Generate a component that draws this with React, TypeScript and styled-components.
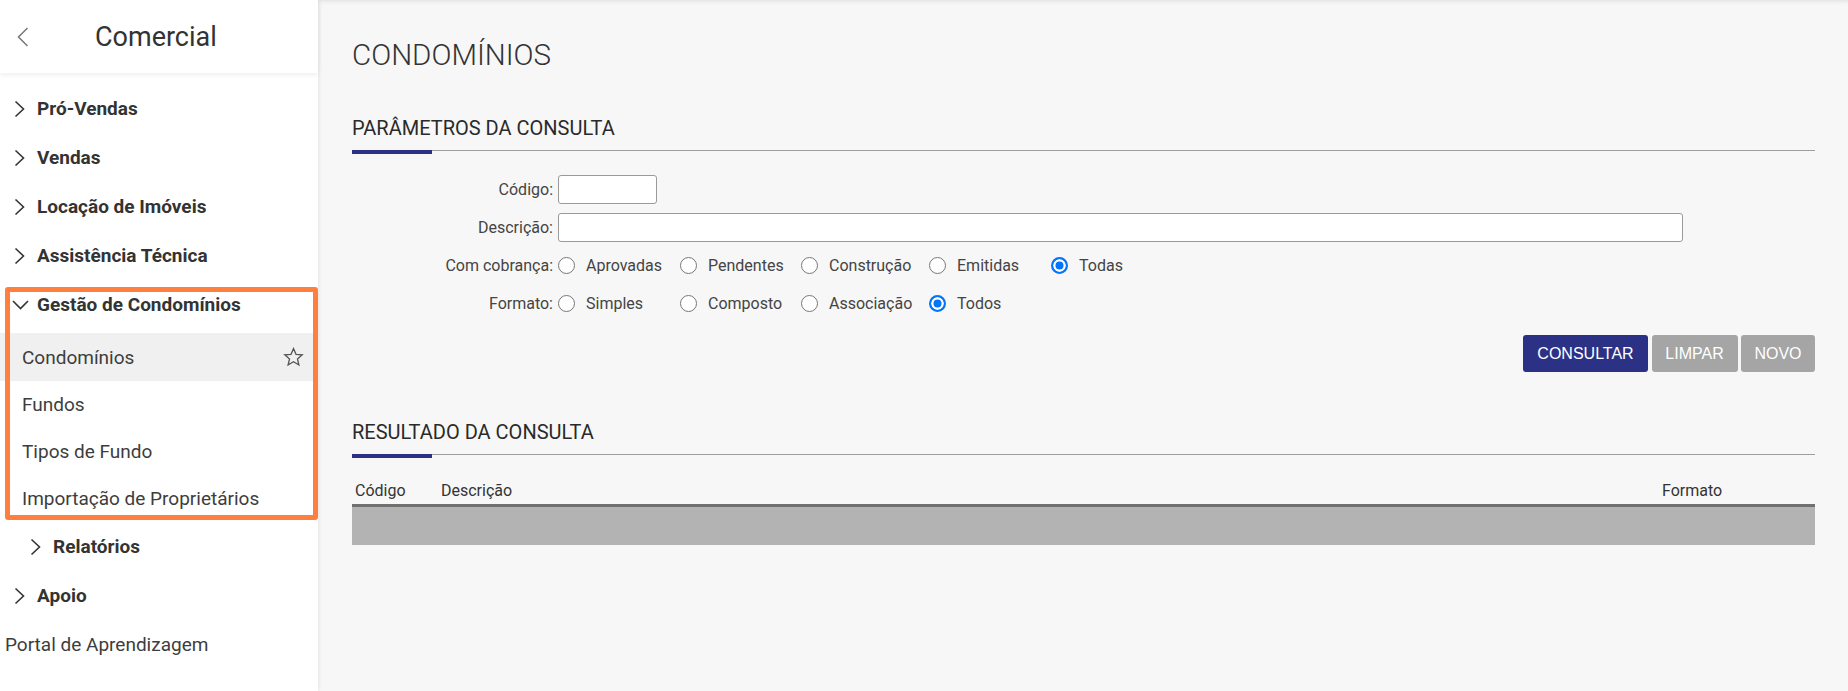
import React from "react";
import styled, { createGlobalStyle } from "styled-components";

const GlobalStyle = createGlobalStyle`
  html, body { margin: 0; padding: 0; }
  body { font-family: Roboto, "Liberation Sans", Arial, sans-serif; background: #f7f7f7; }
  * { box-sizing: border-box; }
`;

const Page = styled.div`
  display: flex;
  height: 691px;
  overflow: hidden;
`;

const Sidebar = styled.aside`
  position: relative;
  width: 318px;
  flex: 0 0 318px;
  background: #ffffff;
  box-shadow: 1px 0 4px rgba(0, 0, 0, 0.08);
  z-index: 2;
`;

const SideHeader = styled.div`
  display: flex;
  align-items: center;
  height: 73px;
  box-shadow: 0 2px 5px rgba(0, 0, 0, 0.07);
  padding-left: 17px;
`;

const SideTitle = styled.div`
  margin-left: 66px;
  font-size: 27px;
  color: #333;
  font-weight: 400;
`;

const Menu = styled.nav`
  padding-top: 11px;
`;

const Item = styled.div<{ $h: number; $indent: number; $bold?: boolean; $active?: boolean; $pb?: number }>`
  display: flex;
  align-items: center;
  height: ${(p) => p.$h}px;
  padding-left: ${(p) => p.$indent}px;
  padding-bottom: ${(p) => p.$pb ?? 0}px;
  padding-right: 12px;
  font-size: 19px;
  font-weight: ${(p) => (p.$bold ? 700 : 400)};
  color: ${(p) => (p.$bold ? "#333" : "#3d3d3d")};
  background: ${(p) => (p.$active ? "#f0f0f0" : "transparent")};
  white-space: nowrap;
`;

const ChevSlot = styled.span`
  display: inline-flex;
  align-items: center;
  width: 23px;
  flex: 0 0 23px;
`;

const ItemText = styled.span`
  flex: 1;
`;

const StarWrap = styled.span`
  display: inline-flex;
  margin-right: 2px;
`;

const Highlight = styled.div`
  position: absolute;
  left: 5px;
  top: 287px;
  width: 313px;
  height: 233px;
  border: 5px solid #ff7f3f;
  border-radius: 3px;
  pointer-events: none;
`;

const Main = styled.main`
  flex: 1;
  padding: 39px 33px 0 34px;
  background: #f7f7f7;
  box-shadow: inset 0 5px 5px -4px rgba(0, 0, 0, 0.1);
`;

const PageTitle = styled.h1`
  margin: 0;
  font-size: 29.5px;
  line-height: 32px;
  font-weight: 300;
  color: #333;
`;

const Section = styled.section<{ $mt: number }>`
  margin-top: ${(p) => p.$mt}px;
`;

const SectionTitle = styled.h2`
  margin: 0 0 10px 0;
  font-size: 20px;
  line-height: 24px;
  font-weight: 400;
  color: #2a2a2a;
`;

const Rule = styled.div`
  position: relative;
  height: 4px;
  background: linear-gradient(#9e9e9e, #9e9e9e) top left / 100% 1px no-repeat;
  &::before {
    content: "";
    position: absolute;
    left: 0;
    top: 0;
    width: 80px;
    height: 4px;
    background: #2b3185;
  }
`;

const Form = styled.div`
  display: grid;
  grid-template-columns: 201px 1fr;
  column-gap: 5px;
  row-gap: 9px;
  margin-top: 21px;
  grid-auto-rows: 29px;
`;

const Label = styled.label`
  display: flex;
  align-items: center;
  justify-content: flex-end;
  font-size: 16px;
  color: #444;
`;

const Field = styled.div`
  display: flex;
  align-items: center;
`;

const Input = styled.input<{ $w: number }>`
  width: ${(p) => p.$w}px;
  height: 29px;
  border: 1px solid #9a9a9a;
  border-radius: 3px;
  background: #fff;
  font-family: inherit;
  font-size: 16px;
  padding: 0 6px;
  outline: none;
`;

const RadioGroup = styled.div`
  display: grid;
  grid-template-columns: 122px 121px 128px 122px auto;
  align-items: center;
`;

const RadioOption = styled.label`
  display: flex;
  align-items: center;
  gap: 11px;
  font-size: 16px;
  color: #444;
  white-space: nowrap;
`;

const RadioDot = styled.span<{ $on?: boolean }>`
  display: inline-block;
  width: 17px;
  height: 17px;
  border-radius: 50%;
  border: ${(p) => (p.$on ? "2px solid #0075ff" : "1.5px solid #777")};
  background: ${(p) => (p.$on ? "#0075ff" : "#fff")};
  box-shadow: ${(p) => (p.$on ? "inset 0 0 0 2.5px #fff" : "none")};
`;

const Buttons = styled.div`
  display: flex;
  justify-content: flex-end;
  gap: 3.5px;
  margin-top: 17px;
`;

const Button = styled.button<{ $primary?: boolean; $w: number }>`
  width: ${(p) => p.$w}px;
  height: 37px;
  border: none;
  border-radius: 3px;
  background: ${(p) => (p.$primary ? "#2b3185" : "#a5a5a5")};
  color: #fff;
  font-family: "Liberation Sans", Arial, sans-serif;
  font-size: 16px;
  text-transform: uppercase;
  cursor: pointer;
  padding: 0;
`;

const TableHead = styled.div`
  display: grid;
  grid-template-columns: 86px 1fr 153px;
  margin-top: 19px;
  height: 27px;
  align-items: center;
  padding-left: 3px;
  font-size: 16px;
  color: #333;
`;

const TableBody = styled.div`
  height: 41px;
  border-top: 3px solid #707070;
  background: #b3b3b3;
`;

const ChevronRight = () => (
  <svg width="12" height="18" viewBox="0 0 12 18" fill="none">
    <path d="M1.5 1.5 L9.5 9 L1.5 16.5" stroke="#333" strokeWidth="1.6" />
  </svg>
);

const ChevronDown = () => (
  <svg width="17" height="10" viewBox="0 0 17 10" fill="none" style={{ marginLeft: -2 }}>
    <path d="M1 1 L8.5 8.5 L16 1" stroke="#333" strokeWidth="1.6" />
  </svg>
);

const BackChevron = () => (
  <svg width="12" height="20" viewBox="0 0 12 20" fill="none">
    <path d="M10.5 1 L1.5 10 L10.5 19" stroke="#777" strokeWidth="1.5" />
  </svg>
);

const StarIcon = () => (
  <svg width="21" height="20" viewBox="0 0 24 23" fill="none">
    <path
      d="M12 1.8 L14.9 8.4 L22 9 L16.6 13.7 L18.2 20.7 L12 17 L5.8 20.7 L7.4 13.7 L2 9 L9.1 8.4 Z"
      stroke="#555"
      strokeWidth="1.5"
      strokeLinejoin="miter"
    />
  </svg>
);

type Opt = { label: string; on?: boolean };

const Radios = ({ opts }: { opts: Opt[] }) => (
  <RadioGroup>
    {opts.map((o) => (
      <RadioOption key={o.label}>
        <RadioDot $on={o.on} />
        {o.label}
      </RadioOption>
    ))}
  </RadioGroup>
);

export default function App() {
  return (
    <>
      <GlobalStyle />
      <Page>
        <Sidebar>
          <SideHeader>
            <BackChevron />
            <SideTitle>Comercial</SideTitle>
          </SideHeader>
          <Menu>
            {["Pró-Vendas", "Vendas", "Locação de Imóveis", "Assistência Técnica"].map((t) => (
              <Item key={t} $h={49} $indent={14} $bold>
                <ChevSlot>
                  <ChevronRight />
                </ChevSlot>
                <ItemText>{t}</ItemText>
              </Item>
            ))}
            <Item $h={53} $indent={14} $bold $pb={4}>
              <ChevSlot>
                <ChevronDown />
              </ChevSlot>
              <ItemText>Gestão de Condomínios</ItemText>
            </Item>
            <Item $h={48} $indent={22} $active>
              <ItemText>Condomínios</ItemText>
              <StarWrap>
                <StarIcon />
              </StarWrap>
            </Item>
            <Item $h={47} $indent={22}>
              <ItemText>Fundos</ItemText>
            </Item>
            <Item $h={47} $indent={22}>
              <ItemText>Tipos de Fundo</ItemText>
            </Item>
            <Item $h={47} $indent={22}>
              <ItemText>Importação de Proprietários</ItemText>
            </Item>
            <Item $h={49} $indent={30} $bold>
              <ChevSlot>
                <ChevronRight />
              </ChevSlot>
              <ItemText>Relatórios</ItemText>
            </Item>
            <Item $h={49} $indent={14} $bold>
              <ChevSlot>
                <ChevronRight />
              </ChevSlot>
              <ItemText>Apoio</ItemText>
            </Item>
            <Item $h={49} $indent={5}>
              <ItemText>Portal de Aprendizagem</ItemText>
            </Item>
          </Menu>
          <Highlight />
        </Sidebar>
        <Main>
          <PageTitle>CONDOMÍNIOS</PageTitle>
          <Section $mt={45}>
            <SectionTitle>PARÂMETROS DA CONSULTA</SectionTitle>
            <Rule />
            <Form>
              <Label>Código:</Label>
              <Field>
                <Input $w={99} />
              </Field>
              <Label>Descrição:</Label>
              <Field>
                <Input $w={1125} />
              </Field>
              <Label>Com cobrança:</Label>
              <Field>
                <Radios
                  opts={[
                    { label: "Aprovadas" },
                    { label: "Pendentes" },
                    { label: "Construção" },
                    { label: "Emitidas" },
                    { label: "Todas", on: true },
                  ]}
                />
              </Field>
              <Label>Formato:</Label>
              <Field>
                <Radios
                  opts={[
                    { label: "Simples" },
                    { label: "Composto" },
                    { label: "Associação" },
                    { label: "Todos", on: true },
                  ]}
                />
              </Field>
            </Form>
            <Buttons>
              <Button $primary $w={125}>Consultar</Button>
              <Button $w={86}>Limpar</Button>
              <Button $w={74}>Novo</Button>
            </Buttons>
          </Section>
          <Section $mt={48}>
            <SectionTitle>RESULTADO DA CONSULTA</SectionTitle>
            <Rule />
            <TableHead>
              <span>Código</span>
              <span>Descrição</span>
              <span>Formato</span>
            </TableHead>
            <TableBody />
          </Section>
        </Main>
      </Page>
    </>
  );
}
